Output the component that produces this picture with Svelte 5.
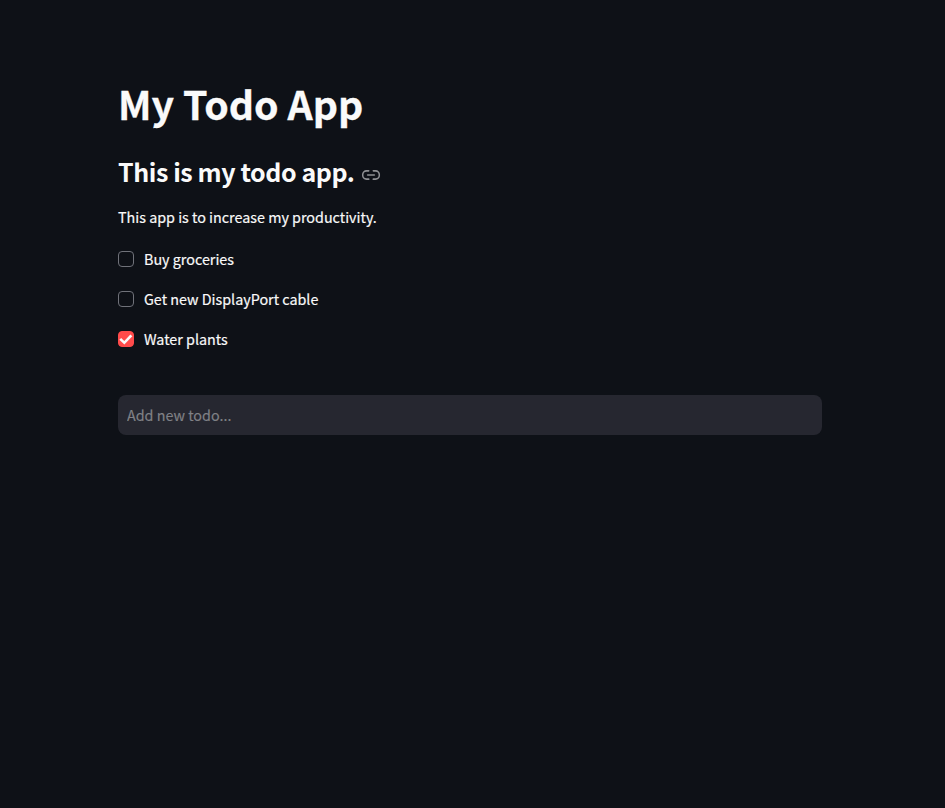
<script>
  let todos = $state([
    { text: 'Buy groceries', done: false },
    { text: 'Get new DisplayPort cable', done: false },
    { text: 'Water plants', done: true }
  ]);
</script>

<main>
  <h1>My Todo App</h1>
  <h2>
    <span>This is my todo app.</span>
    <svg width="20" height="20" viewBox="0 0 24 24" fill="none" stroke="#8f9093" stroke-width="2" stroke-linecap="round" stroke-linejoin="round" aria-hidden="true">
      <path d="M15 7h3a5 5 0 0 1 5 5 5 5 0 0 1-5 5h-3m-6 0H6a5 5 0 0 1-5-5 5 5 0 0 1 5-5h3" transform="translate(1.1 0) scale(.91 1)" />
      <line x1="8" y1="12" x2="16" y2="12" />
    </svg>
  </h2>
  <p>This app is to increase my productivity.</p>
  <div class="list">
    {#each todos as todo}
      <label>
        <input type="checkbox" bind:checked={todo.done} />
        <span class="box" class:checked={todo.done}>
          {#if todo.done}
            <svg width="14" height="11" viewBox="0 0 17 13" fill="#fafafa" aria-hidden="true">
              <path d="M6.5 12.6L0.4 6.9L2.6 4.6L6.4 8.2L13.8 0.4L16.2 2.6L6.5 12.6Z" />
            </svg>
          {/if}
        </span>
        <span class="text">{todo.text}</span>
      </label>
    {/each}
  </div>
  <input class="new" type="text" placeholder="Add new todo..." />
</main>

<style>
  :global(body) {
    background: #0e1117;
  }
  main {
    box-sizing: border-box;
    width: 940px;
    height: 808px;
    padding: 73px 118px 0;
    display: flex;
    flex-direction: column;
    color: #fafafa;
    font-family: 'Noto Sans CJK SC', 'Open Sans', sans-serif;
    font-size: 14.34px;
    overflow: hidden;
  }
  h1 {
    margin: 0;
    height: 60px;
    line-height: 60px;
    font-size: 39.25px;
    font-weight: 700;
    -webkit-text-stroke: 0.3px #fafafa;
  }
  h2 {
    margin: 20px 0 0;
    height: 36px;
    line-height: 36px;
    font-size: 25px;
    font-weight: 700;
    letter-spacing: -0.42px;
    display: flex;
    align-items: center;
    gap: 6px;
  }
  h2 svg {
    margin-top: 7px;
  }
  p {
    margin: 16px 0 0;
    height: 24px;
    line-height: 24px;
    -webkit-text-stroke: 0.18px #fafafa;
  }
  .list {
    margin-top: 18px;
    display: flex;
    flex-direction: column;
    gap: 16px;
  }
  label {
    display: flex;
    align-items: center;
    height: 24px;
    gap: 10px;
  }
  label input {
    display: none;
  }
  .text {
    padding-bottom: 2px;
    -webkit-text-stroke: 0.18px #fafafa;
  }
  .box {
    box-sizing: border-box;
    width: 16px;
    height: 16px;
    border: 1px solid #70727a;
    border-radius: 4px;
    display: flex;
    align-items: center;
    justify-content: center;
  }
  .box.checked {
    background: #ff4b4b;
    border-color: #ff4b4b;
  }
  .box svg {
    flex: none;
  }
  .new {
    box-sizing: border-box;
    margin: 44px 0 0;
    width: 704px;
    height: 40px;
    padding: 0 9px 2px;
    border: 0;
    border-radius: 8px;
    background: #262730;
    color: #fafafa;
    font: inherit;
    outline: none;
  }
  .new::placeholder {
    color: #808186;
    opacity: 1;
    -webkit-text-stroke: 0.15px #808186;
  }
</style>
